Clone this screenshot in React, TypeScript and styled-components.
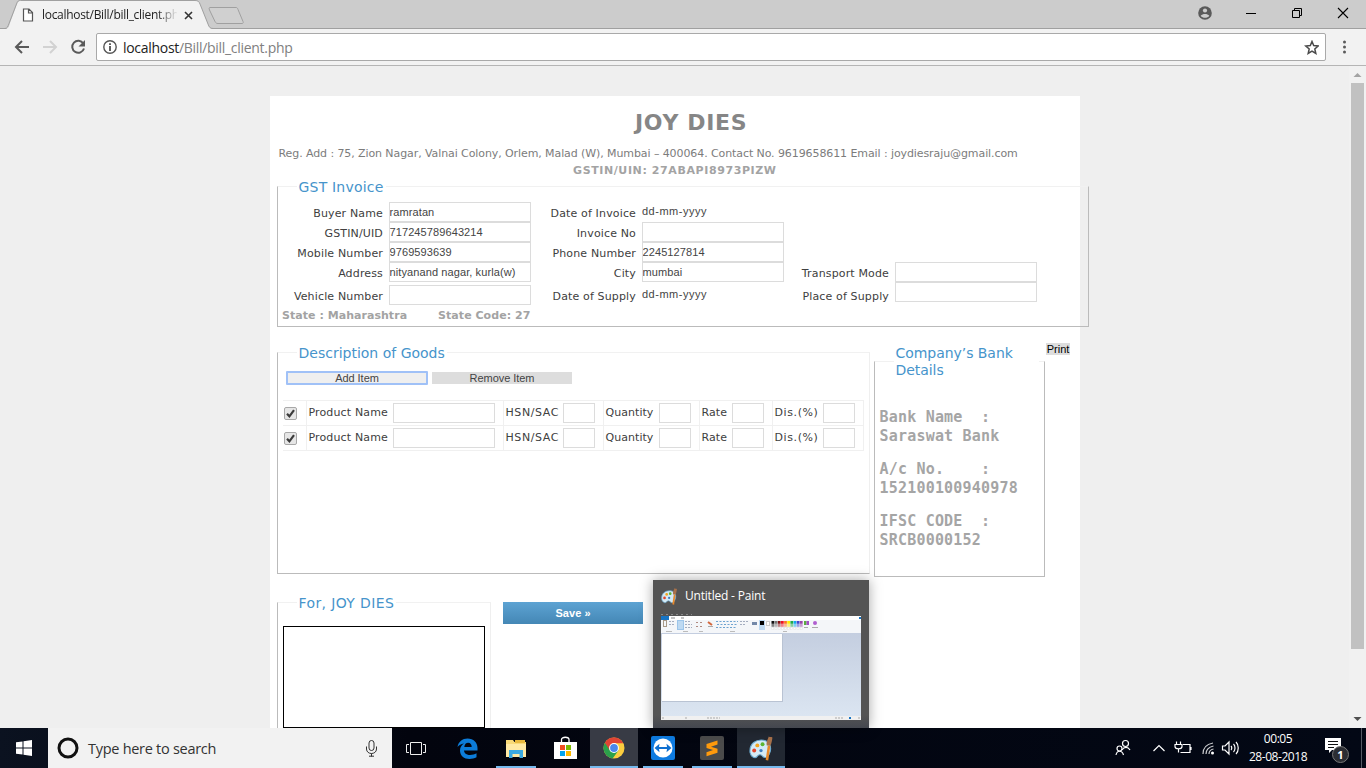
import React from 'react';
import styled, { createGlobalStyle } from 'styled-components';

const Global = createGlobalStyle`
  * { box-sizing: border-box; }
  body { margin: 0; overflow: hidden; font-family: "DejaVu Sans", sans-serif; }
  input, button { margin: 0; padding: 0; border-radius: 0; outline: none; }
`;

const ui = '"Open Sans", "Noto Sans", sans-serif';
const arial = '"Liberation Sans", Arial, sans-serif';

const Screen = styled.div`
  position: relative;
  width: 1366px;
  height: 768px;
  display: flex;
  flex-direction: column;
  overflow: hidden;
  background: #efefef;
`;

/* ---------- browser chrome ---------- */
const TabStrip = styled.div`
  height: 29px;
  flex: none;
  display: flex;
  background: #ccc;
  border-bottom: 1px solid #a0a0a0;
`;
const Tab = styled.div`
  position: relative;
  width: 213px;
  height: 29px;
  display: flex;
  align-items: center;
  padding: 1px 0 0 22px;
`;
const TabShape = styled.svg`
  position: absolute;
  left: 0;
  top: 0;
`;
const PageIcon = styled.svg`
  position: relative;
  flex: none;
`;
const TabTitle = styled.span`
  position: relative;
  width: 135px;
  margin-left: 8px;
  overflow: hidden;
  white-space: nowrap;
  font: 12px/18px ${ui};
  letter-spacing: -0.3px;
  color: #222;
  -webkit-mask-image: linear-gradient(90deg, #000 115px, transparent 136px);
  mask-image: linear-gradient(90deg, #000 115px, transparent 136px);
`;
const TabClose = styled.svg`
  position: relative;
  margin-left: 7px;
`;
const NewTab = styled.svg`
  margin: 6px 0 0 -5px;
`;
const WindowButtons = styled.div`
  margin-left: auto;
  display: flex;
  align-items: flex-start;
`;
const Toolbar = styled.div`
  height: 37px;
  flex: none;
  display: flex;
  align-items: center;
  background: #f2f2f2;
  border-bottom: 1px solid #b5b5b5;
`;
const NavIcons = styled.svg`
  flex: none;
`;
const Omnibox = styled.div`
  width: 1230px;
  height: 28px;
  display: flex;
  align-items: center;
  padding: 0 6px;
  border: 1px solid #a9a9a9;
  border-radius: 2px;
  background: #fff;
`;
const Url = styled.span`
  flex: 1;
  margin-left: 6px;
  padding-top: 1px;
  font: 14px/20px ${ui};
  letter-spacing: -0.3px;
  color: #222;
  & > span { color: #808080; }
`;
const MenuDots = styled.svg`
  margin-left: 16px;
`;

/* ---------- viewport ---------- */
const Viewport = styled.div`
  flex: 1;
  min-height: 0;
  display: flex;
  overflow: hidden;
`;
const PageArea = styled.div`
  width: 1349px;
  padding: 30px 0 0 270px;
`;
const Scrollbar = styled.div`
  width: 17px;
  display: flex;
  flex-direction: column;
  align-items: center;
  background: #f1f1f1;
`;
const Thumb = styled.div`
  width: 13px;
  height: 566px;
  margin-bottom: auto;
  background: #c1c1c1;
`;
const Sheet = styled.main`
  width: 810px;
  height: 660px;
  padding: 0 0 0 7px;
  background: #fff;
`;
const Title = styled.h1`
  margin: 0;
  padding: 13px 0 0 358px;
  height: 49px;
  font: bold 22px/28px "DejaVu Sans", sans-serif;
  letter-spacing: 0.65px;
  white-space: nowrap;
  color: #868686;
`;
const AddressLine = styled.p`
  margin: 0;
  padding-left: 1.5px;
  height: 17px;
  font-size: 11px;
  line-height: 17px;
  letter-spacing: -0.09px;
  white-space: nowrap;
  color: #7c7c7c;
`;
const TaxId = styled.p`
  margin: 0;
  padding-left: 296px;
  height: 24px;
  font-size: 11px;
  line-height: 17px;
  font-weight: bold;
  letter-spacing: 0.6px;
  color: #a3a3a3;
`;
const Panel = styled.section<{ $w: number; $h: number; $soft?: boolean }>`
  flex: none;
  width: ${p => p.$w}px;
  height: ${p => p.$h}px;
  border: 1px solid #bbb;
  border-top-color: #f1f1f1;
  border-right-color: ${p => (p.$soft ? '#efefef' : '#bbb')};
`;
const Legend = styled.h2<{ $w?: number; $track?: number }>`
  margin: ${p => (p.$w ? -17 : -8)}px 0 0 18.5px;
  padding: 0 2px;
  width: ${p => (p.$w ? p.$w + 'px' : 'fit-content')};
  font-size: 14px;
  line-height: 17px;
  font-weight: normal;
  letter-spacing: ${p => p.$track ?? 0}px;
  white-space: nowrap;
  background: #fff;
  color: #4694cb;
`;
const FormGrid = styled.div`
  display: grid;
  grid-template-columns: 111px 142px 111px 142px 111px 142px;
  grid-template-rows: repeat(4, 20px) 23px;
  margin-top: 6px;
`;
const Label = styled.label<{ $drop?: boolean }>`
  padding: ${p => (p.$drop ? '6px' : '3px')} 6px 0 0;
  text-align: right;
  font-size: 11px;
  line-height: 17px;
  letter-spacing: 0.15px;
  white-space: nowrap;
  color: #404040;
`;
const Field = styled.input<{ $w?: number; $bottom?: boolean }>`
  display: block;
  flex: none;
  width: ${p => p.$w ?? 142}px;
  height: 20px;
  align-self: ${p => (p.$bottom ? 'end' : 'start')};
  padding: 0 0 1px;
  border: 1px solid #dcdcdc;
  background: #fff;
  font: 11px ${arial};
  letter-spacing: 0.1px;
  text-indent: -0.5px;
  color: #444;
`;
const DateText = styled.span<{ $drop?: boolean }>`
  padding-top: ${p => (p.$drop ? 3 : 0)}px;
  font: 11px/19px ${arial};
  letter-spacing: 0.5px;
  color: #444;
`;
const StateLine = styled.div`
  display: flex;
  gap: 31px;
  padding: 3px 0 0 4px;
  font-size: 11px;
  line-height: 16px;
  font-weight: bold;
  letter-spacing: 0.04px;
  white-space: nowrap;
  color: #a3a3a3;
`;
const Middle = styled.div`
  display: flex;
  align-items: flex-start;
  height: 250px;
  padding-top: 25px;
`;
const BankColumn = styled.div`
  margin: 9px 0 0 4px;
`;
const PrintButton = styled.button`
  width: 24px;
  height: 12px;
  margin: -9px 0 0 1px;
  border: 0;
  background: #ddd;
  font: 11px/12px ${arial};
  color: #000;
`;
const Buttons = styled.div`
  display: flex;
  align-items: center;
  gap: 4px;
  padding: 9px 0 0 8px;
`;
const ItemButton = styled.button<{ $focus?: boolean }>`
  width: ${p => (p.$focus ? 142 : 140)}px;
  height: ${p => (p.$focus ? 14 : 12)}px;
  border: ${p => (p.$focus ? '2px solid #a0c1f7' : '0')};
  border-radius: ${p => (p.$focus ? 1 : 0)}px;
  background: ${p => (p.$focus ? '#efefef' : '#ddd')};
  font: 11px/10px ${arial};
  letter-spacing: -0.05px;
  color: #444;
`;
const Goods = styled.table`
  width: 580px;
  margin: 15px 0 0 5px;
  border-collapse: collapse;
  table-layout: fixed;
`;
const Cell = styled.td`
  height: 25px;
  padding: 0;
  border: 1px solid #f0f0f0;
  &:first-child { border-left: 0; }
`;
const CellRow = styled.div<{ $track: number }>`
  display: flex;
  justify-content: space-between;
  height: 24px;
  padding: 2px 8px 0 2px;
  font-size: 11px;
  line-height: 20px;
  letter-spacing: ${p => p.$track}px;
  white-space: nowrap;
  color: #404040;
`;
const Check = styled.svg`
  display: block;
  margin: 1px 0 0 1px;
`;
const BankText = styled.div`
  padding: 29px 0 0 4.5px;
  font: bold 15px/19px "DejaVu Sans Mono", monospace;
  letter-spacing: 0.2px;
  white-space: pre;
  color: #a5a5a5;
  & p { margin: 0 0 14px; }
`;
const Bottom = styled.div`
  display: flex;
  align-items: flex-start;
  padding-top: 25px;
`;
const SignBox = styled.div`
  width: 202px;
  height: 102px;
  margin: 14px 0 0 5px;
  border: 1px solid #000;
`;
const SaveButton = styled.button`
  width: 140px;
  height: 22px;
  margin-left: 12px;
  border: 0;
  background: linear-gradient(#5da3d3, #4487b5);
  font: bold 11px/22px ${arial};
  letter-spacing: 0.05px;
  color: #fff;
`;

/* ---------- window preview ---------- */
const Preview = styled.aside`
  position: absolute;
  left: 653px;
  top: 580px;
  width: 216px;
  height: 148px;
  padding: 0 8px;
  background: linear-gradient(#545454 135px, #44474f);
  box-shadow: 0 0 12px rgba(0, 0, 0, 0.35);
`;
const PreviewTitle = styled.div`
  display: flex;
  align-items: center;
  gap: 7px;
  height: 34px;
  padding-bottom: 2px;
  font: 12px/16px ${ui};
  letter-spacing: -0.2px;
  color: #fff;
`;

/* ---------- taskbar ---------- */
const Taskbar = styled.footer`
  position: relative;
  height: 40px;
  flex: none;
  display: flex;
  background: linear-gradient(90deg, #0b1220, #02040e 30%, #030815);
`;
const Start = styled.div`
  width: 48px;
  flex: none;
  display: flex;
  align-items: center;
  justify-content: center;
`;
const Search = styled.div`
  width: 344px;
  flex: none;
  display: flex;
  align-items: center;
  padding: 0 14px 0 9px;
  background: #f2f2f2;
  font: 14.5px/20px ${ui};
  letter-spacing: -0.28px;
  color: #333;
  & > span { flex: 1; margin-left: 9px; padding-top: 1px; }
`;
const TaskButton = styled.div<{ $active?: string; $line?: number }>`
  width: 48px;
  flex: none;
  margin-right: 1px;
  display: flex;
  align-items: center;
  justify-content: center;
  background-color: ${p => p.$active ?? 'transparent'};
  background-image: ${p => (p.$line ? 'linear-gradient(#76b9ed, #76b9ed)' : 'none')};
  background-repeat: no-repeat;
  background-position: center bottom;
  background-size: ${p => p.$line ?? 0}px 2px;
`;
const TaskView = styled(TaskButton)`
  margin-right: 3px;
`;
const Tray = styled.div`
  margin-left: auto;
  width: 255px;
  flex: none;
  display: flex;
  align-items: center;
`;
const Clock = styled.div`
  width: 60px;
  margin-left: 7px;
  text-align: center;
  font: 12px/18px ${ui};
  letter-spacing: -0.45px;
  color: #fff;
`;
const Notice = styled.div`
  position: relative;
  width: 26px;
  height: 26px;
  margin: 4px 0 0 16px;
`;
const Badge = styled.span`
  position: absolute;
  left: 8px;
  top: 9px;
  width: 17px;
  height: 17px;
  border: 1px solid #777;
  border-radius: 50%;
  background: #2b2d33;
  text-align: center;
  font: bold 11px/15px ${ui};
  color: #fff;
`;
const Peek = styled.div`
  width: 1px;
  height: 40px;
  margin-left: 11px;
  background: #555a64;
`;

const Palette = ({ size }: { size: number }) => (
  <svg width={size} height={size} viewBox="0 0 24 24">
    <path d="M1 16C0 7 7 3 14 4c6 1 8 7 6 12-2 5.500-5 5.500-7 3.500-1-2-4-2-5 0-2 2.500-6 1-7-3.500z" fill="#d4eaf6" stroke="#6aa9cf" strokeWidth="1" />
    <circle cx="8" cy="9" r="1.9" fill="#f3a51f" />
    <circle cx="13" cy="8" r="1.9" fill="#5cb531" />
    <circle cx="5" cy="14" r="1.9" fill="#e2452c" />
    <circle cx="11.5" cy="14" r="1.6" fill="#3c7dc1" />
    <path d="M18 9 16 23 18.500 23.500 20.500 9z" fill="#e8892b" />
    <path d="M17 9c-.7-3 .8-5 2-8.500 1 1 2.300 0 3.500 1-.5 3-.5 5-2 7.500z" fill="#a8714a" />
  </svg>
);

const swatches = ['#111', '#777', '#811', '#e12', '#f72', '#fe0', '#2a4', '#1ae', '#44c', '#94a'];

const PaintThumb = () => (
  <svg width="200" height="106" viewBox="0 0 200 106">
    <defs>
      <linearGradient id="desk" x1="0" y1="0" x2="0" y2="1">
        <stop offset="0" stopColor="#c4cee0" />
        <stop offset="1" stopColor="#dbe5f1" />
      </linearGradient>
    </defs>
    <rect width="200" height="2" fill="#545454" />
    <path d="M0 0.500h31" stroke="#888" strokeDasharray="2 3" />
    <rect y="2" width="200" height="103" fill="#fff" />
    <rect y="2" width="8" height="4" fill="#1774c4" />
    <path d="M10 4h4M20 4h3" stroke="#888" />
    <rect x="198" y="3" width="2" height="2" fill="#1774c4" />
    <rect y="6" width="200" height="13" fill="#f4f6f9" />
    <g fill="none" strokeWidth="1">
      <rect x="2.500" y="6.500" width="3" height="6" stroke="#a99a88" />
      <path d="M8 7.500h5M8 10.500h6M24 7.500h6M24 10.500h7M24 13.500h7M79 7.500h8M79 10.500h5" stroke="#a4adbf" strokeDasharray="2 1" />
      <rect x="16.500" y="6.500" width="6" height="9" fill="#bdd9f2" stroke="#9cc5ea" />
      <path d="M35 8.500h8M35 12.500h8" stroke="#b08a80" strokeDasharray="2 2" />
      <path d="M47 8l4 3" stroke="#d3683e" strokeWidth="2" />
      <path d="M47 12.500h5" stroke="#aaa" />
      <path d="M55 7.500h22M56 10.500h21M55 13.500h20" stroke="#6fa3d0" strokeDasharray="2 1.5" />
      <path d="M5 17.500h6M22 17.500h5M38 17.500h4M69 17.500h5M122 17.500h4" stroke="#bbb" />
      <path d="M91 9.500h5" stroke="#7388a8" strokeWidth="3" />
    </g>
    <rect x="98" y="6" width="6" height="10" fill="#bdd9f2" />
    <rect x="99" y="7" width="4" height="4" fill="#000" />
    <rect x="105.500" y="7.500" width="3" height="4" fill="#fff" stroke="#ccc" />
    {swatches.map((c, i) => (
      <g key={c}>
        <rect x={110.5 + i * 3.15} y="7" width="2.8" height="2.8" fill={c} />
        <rect x={110.5 + i * 3.15} y="10" width="2.8" height="2.8" fill={c} opacity="0.5" />
        <rect x={110.8 + i * 3.15} y="13.5" width="2" height="2" fill="#fff" stroke="#ddd" strokeWidth="0.5" />
      </g>
    ))}
    <rect x="143" y="7" width="2.500" height="4" fill="#5bab3f" />
    <rect x="145.500" y="7" width="2.500" height="4" fill="#a34cc4" />
    <path d="M151 13.500h6M143 13.500h4" stroke="#aaa" />
    <circle cx="154" cy="9" r="2" fill="#b05fd0" />
    <rect y="19" width="200" height="83" fill="url(#desk)" />
    <rect x="1" y="20" width="121" height="68" fill="#b9c3d3" />
    <rect x="1" y="20" width="120" height="67" fill="#fff" />
    <rect y="102" width="200" height="4" fill="#f0f0f0" />
    <path d="M1 104h2M24 104h2M46 104h13M174 104h8M197 104h2" stroke="#aaa" strokeDasharray="2 1" />
    <rect x="188" y="103" width="2" height="2" fill="#1774c4" />
  </svg>
);

const CheckBox = () => (
  <Check width="13" height="13" viewBox="0 0 13 13">
    <rect x="0.500" y="0.500" width="12" height="12" rx="1.500" fill="#e6e6e6" stroke="#a8a8a8" />
    <path d="M3 6.800 5.400 9.300 10 3.200" fill="none" stroke="#3b3b3b" strokeWidth="2.200" />
  </Check>
);

const columns = [
  { label: 'Product Name', width: 102, track: 0.14 },
  { label: 'HSN/SAC', width: 32, track: 0.6 },
  { label: 'Quantity', width: 32, track: 0.05 },
  { label: 'Rate', width: 32, track: 0.1 },
  { label: 'Dis.(%)', width: 32, track: 0.6 },
];

const GoodsRow = () => (
  <tr>
    <Cell><CheckBox /></Cell>
    {columns.map(c => (
      <Cell key={c.label}>
        <CellRow $track={c.track}><span>{c.label}</span><Field $w={c.width} /></CellRow>
      </Cell>
    ))}
  </tr>
);

export default function App() {
  return (
    <Screen>
      <Global />
      <TabStrip>
        <Tab>
          <TabShape width="213" height="29">
            <path d="M5.500 29C9 28 9 26 10 23L17 4c1-3 2-3.500 4-3.500h174c3 0 4 1 5 3.500l8 20c1 3 2 4.500 5 5z" fill="#f2f2f2" />
            <path d="M0 28.500h5c2 0 3-2 4-5L16.500 4c1-3 2-3.500 4-3.500H195c3 0 4 1 5 3.500l8 20c1 3 2 4.500 5 4.500" fill="none" stroke="#a0a0a0" />
          </TabShape>
          <PageIcon width="12" height="14" viewBox="0 0 12 14">
            <path d="M1.500 1h5.500l3.500 3.500V13h-9zM6.500 1v4h4" fill="#fff" stroke="#555" strokeWidth="1.200" />
          </PageIcon>
          <TabTitle>localhost/Bill/bill_client.ph</TabTitle>
          <TabClose width="9" height="9"><path d="M1 1l7 7M8 1L1 8" stroke="#333" strokeWidth="1.600" /></TabClose>
        </Tab>
        <NewTab width="36" height="19">
          <path d="M2 1.500h26c1 0 1.500.5 2 2l5 12c.6 1.500 0 2-1 2H10c-1.500 0-2.200-.5-3-2L1.500 4c-.6-1.500-.5-2.500.5-2.500z" fill="#d0d0d0" stroke="#a0a0a0" />
        </NewTab>
        <WindowButtons>
          <svg width="170" height="28">
            <circle cx="9" cy="13" r="6.800" fill="#5a5a5a" />
            <circle cx="9" cy="10.500" r="2.100" fill="#ccc" />
            <path d="M4.700 15.800c1.800-2.400 6.800-2.400 8.600 0-1.800 2.700-6.800 2.700-8.600 0z" fill="#ccc" />
            <path d="M50 13.500h10" stroke="#000" />
            <path d="M96.500 10.500h7v7h-7zM98.500 10.500v-2h7v7h-2" fill="none" stroke="#000" />
            <path d="M142 8l10 10M152 8l-10 10" stroke="#000" strokeWidth="1.100" />
          </svg>
        </WindowButtons>
      </TabStrip>
      <Toolbar>
        <NavIcons width="96" height="36">
          <g fill="none" strokeWidth="2">
            <path d="M29 18H16.500M22 12l-6 6 6 6" stroke="#5a5a5a" />
            <path d="M43 18h12.500M50 12l6 6-6 6" stroke="#d2d2d2" />
            <path d="M83.300 14.500A6 6 0 1 0 84 19.500" stroke="#5a5a5a" />
          </g>
          <path d="M85 11v6.500h-6.500z" fill="#5a5a5a" />
        </NavIcons>
        <Omnibox>
          <svg width="14" height="14">
            <circle cx="7" cy="7" r="6.200" fill="none" stroke="#555" strokeWidth="1.400" />
            <path d="M7 3.200v1.800M7 6v5" stroke="#444" strokeWidth="1.700" />
          </svg>
          <Url>localhost<span>/Bill/bill_client.php</span></Url>
          <svg width="15" height="15" viewBox="0 0 15 15">
            <path d="M8 1.500 9.700 5.600l4.500.4-3.400 3 1 4.400L8 11.100l-3.800 2.300 1-4.400-3.400-3 4.500-.4z" fill="none" stroke="#4a4a4a" strokeWidth="1.500" />
          </svg>
        </Omnibox>
        <MenuDots width="6" height="14">
          <circle cx="2.500" cy="2" r="1.500" fill="#5a5a5a" />
          <circle cx="2.500" cy="7" r="1.500" fill="#5a5a5a" />
          <circle cx="2.500" cy="12" r="1.500" fill="#5a5a5a" />
        </MenuDots>
      </Toolbar>
      <Viewport>
        <PageArea>
          <Sheet>
            <Title>JOY DIES</Title>
            <AddressLine>Reg. Add : 75, Zion Nagar, Valnai Colony, Orlem, Malad (W), Mumbai – 400064. Contact No. 9619658611 Email : joydiesraju@gmail.com</AddressLine>
            <TaxId>GSTIN/UIN: 27ABAPI8973PIZW</TaxId>
            <Panel $w={812} $h={141}>
              <Legend $track={0.2}>GST Invoice</Legend>
              <FormGrid>
                <Label>Buyer Name</Label><Field defaultValue="ramratan" />
                <Label>Date of Invoice</Label><DateText>dd-mm-yyyy</DateText><span /><span />
                <Label>GSTIN/UID</Label><Field defaultValue="717245789643214" />
                <Label>Invoice No</Label><Field /><span /><span />
                <Label>Mobile Number</Label><Field defaultValue="9769593639" />
                <Label>Phone Number</Label><Field defaultValue="2245127814" /><span /><span />
                <Label>Address</Label><Field defaultValue="nityanand nagar, kurla(w)" />
                <Label>City</Label><Field defaultValue="mumbai" />
                <Label>Transport Mode</Label><Field />
                <Label $drop>Vehicle Number</Label><Field $bottom />
                <Label $drop>Date of Supply</Label><DateText $drop>dd-mm-yyyy</DateText>
                <Label $drop>Place of Supply</Label><Field />
              </FormGrid>
              <StateLine><span>State : Maharashtra</span><span>State Code: 27</span></StateLine>
            </Panel>
            <Middle>
              <Panel $w={593} $h={222} $soft>
                <Legend>Description of Goods</Legend>
                <Buttons>
                  <ItemButton $focus>Add Item</ItemButton>
                  <ItemButton>Remove Item</ItemButton>
                </Buttons>
                <Goods>
                  <colgroup>
                    {[23, 197, 100, 96, 73, 91].map((w, i) => <col key={i} width={w} />)}
                  </colgroup>
                  <tbody><GoodsRow /><GoodsRow /></tbody>
                </Goods>
              </Panel>
              <BankColumn>
                <Panel $w={171} $h={216}>
                  <Legend $w={145} $track={-0.05}>Company’s Bank<br />Details</Legend>
                  <BankText>
                    <p>{'Bank Name  :\nSaraswat Bank'}</p>
                    <p>{'A/c No.    :\n152100100940978'}</p>
                    <p>{'IFSC CODE  :\nSRCB0000152'}</p>
                  </BankText>
                </Panel>
              </BankColumn>
              <PrintButton>Print</PrintButton>
            </Middle>
            <Bottom>
              <Panel $w={214} $h={150} $soft>
                <Legend $track={0.38}>For, JOY DIES</Legend>
                <SignBox />
              </Panel>
              <SaveButton>Save »</SaveButton>
            </Bottom>
          </Sheet>
        </PageArea>
        <Scrollbar>
          <svg width="17" height="17"><path d="M4.500 11h8L8.500 7z" fill="#a3a3a3" /></svg>
          <Thumb />
          <svg width="17" height="17"><path d="M4.500 6h8l-4 4z" fill="#505050" /></svg>
        </Scrollbar>
      </Viewport>
      <Taskbar>
        <Start>
          <svg width="16" height="16"><path d="M0 2.300 6.500 1.400V7.500H0zM7.500 1.200 16 0v7.500H7.500zM0 8.500h6.500v6.100L0 13.700zM7.500 8.500H16V16l-8.500-1.200z" fill="#fff" /></svg>
        </Start>
        <Search>
          <svg width="22" height="22"><circle cx="11" cy="11" r="9" fill="none" stroke="#111" strokeWidth="3" /></svg>
          <span>Type here to search</span>
          <svg width="13" height="17" viewBox="0 0 13 17">
            <path d="M4 3a2.500 2.500 0 0 1 5 0v5a2.500 2.500 0 0 1-5 0zM1.500 6.500V9c0 6 10 6 10 0V6.500M6.500 13.500v3M4 16.200h5" fill="none" stroke="#333" />
          </svg>
        </Search>
        <TaskView>
          <svg width="20" height="15"><path d="M4.500 1.500h11v12h-11zM3 3.500H.5v8H3M17 3.500h2.500v8H17" fill="none" stroke="#eee" /></svg>
        </TaskView>
        <TaskButton>
          <svg width="21" height="21" viewBox="0 0 21 21">
            <path d="M.5 9C1.500 3.500 5.500.5 10.500.5c6 0 10 4 10 9.500v2.500H7c.2 3 3 4.500 6 4.500 2.500 0 4.700-.7 6.500-1.700v4C17.500 20.500 15 21 12.500 21 7 21 3 17.500 3 12.500c0-3 1.500-5.500 4-7C4 6 2 7 .5 9zm6.800-.1h7.400c0-2.500-1.300-4.200-3.600-4.200-2 0-3.500 1.600-3.800 4.200z" fill="#0c7cd9" fillRule="evenodd" />
          </svg>
        </TaskButton>
        <TaskButton $line={40}>
          <svg width="22" height="19" viewBox="0 0 22 19">
            <path d="M1 1h7l1.500 2H21v15H1z" fill="#f8d978" />
            <path d="M10 1h10v3H10z" fill="#e8b93e" />
            <path d="M1 5h20v13H1z" fill="#ffe9a4" />
            <path d="M4 19v-8h14v8h-3.500v-4h-7v4z" fill="#3ba9e0" />
          </svg>
        </TaskButton>
        <TaskButton>
          <svg width="23" height="24" viewBox="0 0 23 24">
            <path d="M7.500 7V3.500C7.500.5 15 .5 15 3.500V7" fill="none" stroke="#fff" strokeWidth="1.300" />
            <path d="M0 6h23v17H0z" fill="#fff" />
            <path d="M6 9h5v5H6z" fill="#f04e23" /><path d="M12 9h5v5h-5z" fill="#7dba00" />
            <path d="M6 15h5v5H6z" fill="#00a3ee" /><path d="M12 15h5v5h-5z" fill="#fdb900" />
          </svg>
        </TaskButton>
        <TaskButton $active="#383b45" $line={48}>
          <svg width="22" height="22" viewBox="0 0 22 22">
            <circle cx="11" cy="11" r="10.500" fill="#fccd3f" />
            <path d="M11 11 1.900 5.700A10.500 10.500 0 0 0 9.600 21.400L15.500 13.500z" fill="#2ba14b" />
            <path d="M11 .5A10.500 10.500 0 0 0 1.900 5.700L6.800 13.300 11 6.200h9.300A10.500 10.500 0 0 0 11 .5z" fill="#e04434" />
            <circle cx="11" cy="11" r="4.900" fill="#fff" />
            <circle cx="11" cy="11" r="3.900" fill="#4a86ec" />
          </svg>
        </TaskButton>
        <TaskButton $line={40}>
          <svg width="24" height="24" viewBox="0 0 24 24">
            <rect width="24" height="24" rx="2" fill="#0e7be0" />
            <circle cx="12" cy="12" r="9.500" fill="#fff" />
            <path d="M3.500 12 8.500 7.800 8 11h8l-.5-3.200 5 4.200-5 4.200L16 13H8l.5 3.200z" fill="#0e6fd0" />
          </svg>
        </TaskButton>
        <TaskButton $line={40}>
          <svg width="24" height="24" viewBox="0 0 24 24">
            <rect width="24" height="24" rx="2" fill="#4b4b4b" />
            <path d="M17.500 4.500v4L11 10.700l6.500 2.100v4L6.500 20.300v-4l6.500-2.200-6.500-2.200v-4z" fill="#ff9a0c" />
          </svg>
        </TaskButton>
        <TaskButton $active="#222832" $line={48}><Palette size={25} /></TaskButton>
        <Tray>
          <svg width="130" height="24" viewBox="0 0 130 24">
            <g fill="none" stroke="#fff" strokeWidth="1.200">
              <circle cx="14.500" cy="7.500" r="3" /><path d="M11 14c2-3.500 6-3.500 8 0" />
              <circle cx="8.500" cy="12.500" r="2.500" /><path d="M5 19c1-5 6-5 7.500 0" />
              <path d="M42.500 15l5.500-5.500 5.500 5.500" />
              <path d="M72 8.500h7v8H69.500M80 11v3M65.500 5.500v3M69.500 5.500v3M64 8.500h7v2c0 3-7 3-7 0zM67.500 12.500v4" />
              <path d="M92 18c0-6 4-10 10-11M95 18c0-4 3-7 7.500-8M98 18c0-2.500 2-4.500 4.500-5" opacity="0.800" />
              <path d="M111.500 10h2.500l4-4v12l-4-4h-2.500zM120 10c1 1 1 3 0 4M122.500 8c2 2 2 6 0 8M125 6c3 3 3 9 0 12" />
            </g>
            <circle cx="101.500" cy="17" r="1.500" fill="#fff" />
          </svg>
          <Clock>00:05<br />28-08-2018</Clock>
          <Notice>
            <svg width="18" height="18"><path d="M1 1h16v12H8l-3 3v-3H1z" fill="#fff" /><path d="M4 4.500h10M4 7.500h10M4 10.500h6" stroke="#111" /></svg>
            <Badge>1</Badge>
          </Notice>
          <Peek />
        </Tray>
      </Taskbar>
      <Preview>
        <PreviewTitle><Palette size={17} />Untitled - Paint</PreviewTitle>
        <PaintThumb />
      </Preview>
    </Screen>
  );
}
